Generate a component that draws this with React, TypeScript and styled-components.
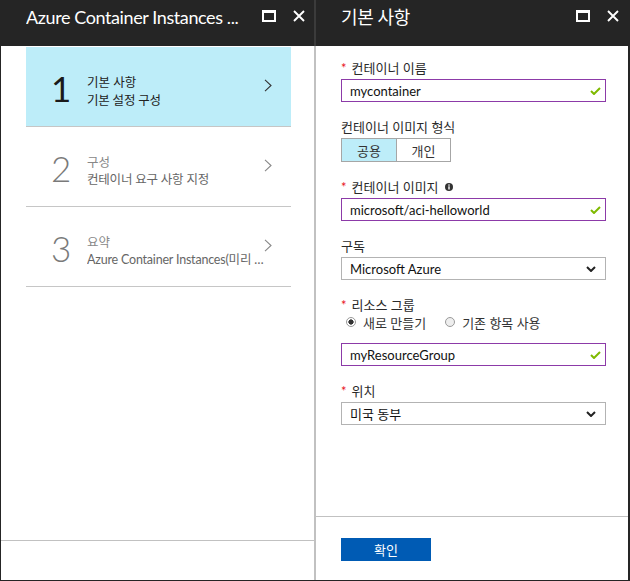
import styled, { createGlobalStyle } from 'styled-components'

const GlobalStyle = createGlobalStyle`
  html, body {
    margin: 0;
    padding: 0;
    background: #fff;
  }

  body {
    font-family: "Segoe UI", Lato, "Noto Sans CJK KR", sans-serif;
    color: #222;
  }
`

const Frame = styled.div`
  width: 630px;
  height: 581px;
  box-sizing: border-box;
  display: flex;
  border: 1px solid #252525;
  border-top: 0;
  border-right-width: 2px;
`

const Panel = styled.section<{ $width?: number }>`
  display: flex;
  flex-direction: column;
  width: ${({ $width }) => ($width ? `${$width}px` : 'auto')};
  flex: ${({ $width }) => ($width ? 'none' : '1')};
  min-width: 0;
`

const Divider = styled.div`
  width: 2px;
  flex: none;
  background: linear-gradient(#3b3b3b 0 46px, #c1c1c1 46px);
`

const Header = styled.header`
  height: 46px;
  box-sizing: border-box;
  flex: none;
  display: flex;
  align-items: flex-start;
  padding: 5px 9px 0 25px;
  background: #252525;
  color: #fff;
`

const Title = styled.h1`
  flex: 1;
  min-width: 0;
  margin: 0 8px 0 0;
  font-size: 18px;
  font-weight: 400;
  line-height: 24px;
  letter-spacing: -0.4px;
  white-space: nowrap;
  overflow: hidden;
  text-overflow: ellipsis;
`

const HeaderButtons = styled.div`
  display: flex;
  flex: none;
  gap: 17px;
  margin-top: 5px;
`

const MaximizeIcon = styled.span`
  display: block;
  width: 14px;
  height: 12px;
  box-sizing: border-box;
  border: 2px solid #fff;
  border-top-width: 3px;
`

const CloseIcon = () => (
  <svg width="12" height="12" viewBox="0 0 12 12">
    <path d="M1 1 L11 11 M11 1 L1 11" stroke="#fff" strokeWidth="1.9" fill="none" />
  </svg>
)

const LeftBody = styled.div`
  flex: 1;
  display: flex;
  flex-direction: column;
`

const Steps = styled.ol`
  list-style: none;
  margin: 0;
  padding: 1px 23px 0 25px;
`

const Step = styled.li<{ $active?: boolean }>`
  height: 79px;
  display: flex;
  align-items: center;
  padding: 0 19px 0 25px;
  border-bottom: 1px solid #c6c6c6;
  background: ${({ $active }) => ($active ? '#bdedf9' : 'transparent')};
`

const StepNumber = styled.span<{ $active?: boolean }>`
  width: 36px;
  flex: none;
  font-size: 35px;
  line-height: 1;
  margin-top: 4px;
  font-weight: ${({ $active }) => ($active ? 400 : 300)};
  color: ${({ $active }) => ($active ? '#1a1a1a' : '#7a7a7a')};
`

const StepText = styled.div`
  flex: 1;
  min-width: 0;
  margin: 10px -2px 0 0;
  font-size: 12.5px;
`

const StepTitle = styled.div<{ $active?: boolean }>`
  line-height: ${({ $active }) => ($active ? '19px' : '16px')};
  color: ${({ $active }) => ($active ? '#222' : '#888')};
`

const StepSubtitle = styled.div<{ $active?: boolean }>`
  line-height: 18px;
  letter-spacing: -0.2px;
  white-space: nowrap;
  overflow: hidden;
  text-overflow: ellipsis;
  color: ${({ $active }) => ($active ? '#222' : '#666')};
`

const StepChevron = ({ color }: { color: string }) => (
  <svg width="8" height="13" viewBox="0 0 8 13" style={{ flex: 'none', marginBottom: 2 }}>
    <path d="M1 0.8 L7 6.5 L1 12.2" stroke={color} strokeWidth="1.1" fill="none" />
  </svg>
)

const Spacer = styled.div`
  flex: 1;
`

const LeftFooter = styled.footer`
  height: 39px;
  border-top: 1px solid #c1c1c1;
`

const RightBody = styled.div`
  flex: 1;
  display: flex;
  flex-direction: column;
`

const Form = styled.form`
  display: flex;
  flex-direction: column;
  gap: 16px;
  padding: 13px 22px 0 25px;
`

const Field = styled.div`
  display: flex;
  flex-direction: column;
  gap: 2px;
`

const Label = styled.label`
  height: 18px;
  display: flex;
  align-items: center;
  font-size: 13px;
  line-height: 18px;
  color: #2a2a2a;
`

const Required = styled.span`
  color: #e81123;
  margin-right: 5px;
`

const InfoIcon = () => (
  <svg width="8" height="8" viewBox="0 0 8 8" style={{ marginLeft: 6 }}>
    <circle cx="4" cy="4" r="4" fill="#333" />
    <rect x="3.3" y="3.3" width="1.4" height="3.2" fill="#fff" />
    <rect x="3.3" y="1.4" width="1.4" height="1.3" fill="#fff" />
  </svg>
)

const Box = styled.div<{ $valid?: boolean }>`
  height: 23px;
  box-sizing: border-box;
  display: flex;
  align-items: center;
  padding: 0 9px 0 8px;
  border: 1px solid ${({ $valid }) => ($valid ? '#8c3aa8' : '#b3b3b3')};
  font-size: 13px;
  color: #111;
`

const BoxValue = styled.span`
  flex: 1;
  white-space: nowrap;
`

const CheckIcon = () => (
  <svg width="11" height="8" viewBox="0 0 11 8" style={{ marginRight: -5 }}>
    <path d="M1 4 L4 7 L10 1" stroke="#7fba00" strokeWidth="2" fill="none" />
  </svg>
)

const DownIcon = () => (
  <svg width="10" height="6" viewBox="0 0 10 6">
    <path d="M1 1 L5 5 L9 1" stroke="#222" strokeWidth="2" fill="none" />
  </svg>
)

const Segmented = styled.div`
  display: flex;
`

const Segment = styled.button<{ $selected?: boolean; $width: number }>`
  width: ${({ $width }) => $width}px;
  height: 24px;
  padding: 0;
  margin-left: -1px;
  border: 1px solid #a6a6a6;
  font: inherit;
  font-size: 13px;
  color: #333;
  background: ${({ $selected }) => ($selected ? '#bdedf9' : '#fff')};

  &:first-child {
    margin-left: 0;
  }
`

const RadioRow = styled.div`
  display: flex;
  align-items: center;
  gap: 19px;
  height: 18px;
  padding-left: 5px;
  margin: -3px 0 10px;
`

const Radio = styled.label`
  display: flex;
  align-items: center;
  gap: 7px;
  font-size: 13px;
  color: #333;
`

const RadioDot = styled.span<{ $checked?: boolean }>`
  width: 10px;
  height: 10px;
  box-sizing: border-box;
  border-radius: 50%;
  border: 1px solid #9a9a9a;
  background: ${({ $checked }) =>
    $checked ? 'radial-gradient(circle, #333 0 2.4px, #fff 2.8px)' : '#eee'};
`

const RightFooter = styled.footer`
  height: 64px;
  box-sizing: border-box;
  padding: 21px 0 0 25px;
  border-top: 1px solid #c1c1c1;
`

const PrimaryButton = styled.button`
  width: 90px;
  height: 23px;
  padding: 0;
  border: 0;
  background: #005bb4;
  color: #fff;
  font: inherit;
  font-size: 13px;
`

const steps = [
  { n: 1, title: '기본 사항', sub: '기본 설정 구성', active: true },
  { n: 2, title: '구성', sub: '컨테이너 요구 사항 지정' },
  { n: 3, title: '요약', sub: 'Azure Container Instances(미리 보기) 만들기' },
]

export default function App() {
  return (
    <>
      <GlobalStyle />
      <Frame>
        <Panel $width={313}>
          <Header>
            <Title>Azure Container Instances ...</Title>
            <HeaderButtons>
              <MaximizeIcon />
              <CloseIcon />
            </HeaderButtons>
          </Header>
          <LeftBody>
            <Steps>
              {steps.map((s) => (
                <Step key={s.n} $active={s.active}>
                  <StepNumber $active={s.active}>{s.n}</StepNumber>
                  <StepText>
                    <StepTitle $active={s.active}>{s.title}</StepTitle>
                    <StepSubtitle $active={s.active}>{s.sub}</StepSubtitle>
                  </StepText>
                  <StepChevron color={s.active ? '#333' : '#888'} />
                </Step>
              ))}
            </Steps>
            <Spacer />
            <LeftFooter />
          </LeftBody>
        </Panel>

        <Divider />

        <Panel>
          <Header>
            <Title>기본 사항</Title>
            <HeaderButtons>
              <MaximizeIcon />
              <CloseIcon />
            </HeaderButtons>
          </Header>
          <RightBody>
            <Form>
              <Field>
                <Label>
                  <Required>*</Required>컨테이너 이름
                </Label>
                <Box $valid>
                  <BoxValue>mycontainer</BoxValue>
                  <CheckIcon />
                </Box>
              </Field>

              <Field>
                <Label>컨테이너 이미지 형식</Label>
                <Segmented>
                  <Segment type="button" $selected $width={56}>
                    공용
                  </Segment>
                  <Segment type="button" $width={55}>
                    개인
                  </Segment>
                </Segmented>
              </Field>

              <Field>
                <Label>
                  <Required>*</Required>컨테이너 이미지
                  <InfoIcon />
                </Label>
                <Box $valid>
                  <BoxValue>microsoft/aci-helloworld</BoxValue>
                  <CheckIcon />
                </Box>
              </Field>

              <Field>
                <Label>구독</Label>
                <Box>
                  <BoxValue>Microsoft Azure</BoxValue>
                  <DownIcon />
                </Box>
              </Field>

              <Field>
                <Label>
                  <Required>*</Required>리소스 그룹
                </Label>
                <RadioRow>
                  <Radio>
                    <RadioDot $checked />
                    새로 만들기
                  </Radio>
                  <Radio>
                    <RadioDot />
                    기존 항목 사용
                  </Radio>
                </RadioRow>
                <Box $valid>
                  <BoxValue>myResourceGroup</BoxValue>
                  <CheckIcon />
                </Box>
              </Field>

              <Field>
                <Label>
                  <Required>*</Required>위치
                </Label>
                <Box>
                  <BoxValue>미국 동부</BoxValue>
                  <DownIcon />
                </Box>
              </Field>
            </Form>
            <Spacer />
            <RightFooter>
              <PrimaryButton type="button">확인</PrimaryButton>
            </RightFooter>
          </RightBody>
        </Panel>
      </Frame>
    </>
  )
}
